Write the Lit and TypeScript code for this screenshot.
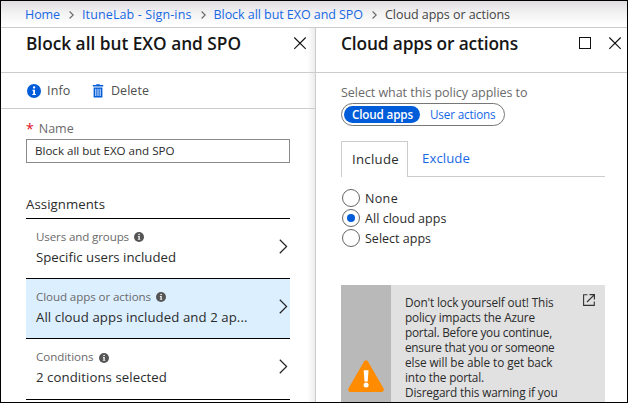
import { LitElement, html, css, svg } from "lit";
import { customElement, property, query, state } from "lit/decorators.js";
import { classMap } from "lit/directives/class-map.js";

/** A single line of text, tracked so that it fills a given measure. */
@customElement("fit-text")
class FitText extends LitElement {
  static styles = css`
    :host { display: block; flex: none; white-space: pre; }
    .run { display: inline-block; }
  `;
  @property() text = "";
  @property({ type: Number }) measure = 0;
  @query(".run") run!: HTMLElement;
  updated() {
    this.run.style.letterSpacing = "0px";
    const natural = this.run.getBoundingClientRect().width;
    if (this.measure) this.run.style.letterSpacing = `${(this.measure - natural) / this.text.length}px`;
  }
  render() {
    return html`<span class="run">${this.text}</span>`;
  }
}

const t = (text: string, measure: number, cls = "") =>
  html`<fit-text class=${cls} .text=${text} .measure=${measure}></fit-text>`;

const closeIcon = html`<svg class="icon" width="14" height="14" viewBox="0 0 14 14">
  <path d="M1.3.5 12.7 11.9M12.7.5 1.3 11.9" fill="none" stroke="#111" stroke-width="1.1"/></svg>`;
const squareIcon = html`<svg class="icon" width="12" height="12" viewBox="0 0 12 12">
  <rect x=".5" y=".5" width="11" height="11" fill="none" stroke="#111"/></svg>`;
const crumbIcon = html`<svg class="crumb-sep" width="5" height="8" viewBox="0 0 5 8">
  <path d="M.6.5 4.2 4 .6 7.5" fill="none" stroke="#666" stroke-width="1.1"/></svg>`;
const chevronIcon = html`<svg class="chevron" width="9" height="15" viewBox="0 0 9 15">
  <path d="M.8.8 7.6 7.5.8 14.2" fill="none" stroke="#222" stroke-width="1.2"/></svg>`;
const infoShape = (fill: string) => svg`<circle cx="7" cy="7" r="7" fill=${fill}/>
  <circle cx="7.1" cy="3.5" r="1.15" fill="#fff"/>
  <path d="M5.4 5.7H8V10H9V11H5.3V10H6.2V6.7H5.4Z" fill="#fff"/>`;
const infoIcon = html`<svg width="14" height="14" viewBox="0 0 14 14">${infoShape("#015cda")}</svg>`;
const hintIcon = html`<svg class="hint" width="10" height="10" viewBox="0 0 14 14">${infoShape("#555")}</svg>`;
const trashIcon = html`<svg class="trash" width="12" height="14" viewBox="0 0 12 14">
  <path d="M4.2 1V.2H7.8V1H11.2V2.5H.8V1Z" fill="#015cda"/>
  <path d="M1.6 3.5H10.4V13.5H1.6Z" fill="#015cda"/>
  <path d="M3.8 4.8V12M6 4.8V12M8.2 4.8V12" stroke="#fff" stroke-width=".9"/></svg>`;
const warningIcon = html`<svg class="warning" width="36" height="33" viewBox="0 0 36 33">
  <path d="M16 1.6Q18-.9 20 1.6L35.6 28.6Q36.8 32 33.2 32H2.8Q-.8 32 .4 28.6Z" fill="#ff8c00"/>
  <path d="M15.7 10.3H20.5L19.7 21.5H16.5Z" fill="#fff"/><circle cx="18.1" cy="24.9" r="2.5" fill="#fff"/></svg>`;
const openIcon = html`<svg class="open" width="12" height="12" viewBox="0 0 12 12">
  <path d="M4.5.7H.6V11.4H11.3V7.5" fill="none" stroke="#333" stroke-width="1.1"/>
  <path d="M6.5.6H11.4V5.5M11.2.8 4 8" fill="none" stroke="#333" stroke-width="1.2"/></svg>`;

const crumbs = [
  { text: "Home", measure: 35 },
  { text: "ItuneLab - Sign-ins", measure: 109.5 },
  { text: "Block all but EXO and SPO", measure: 149.5 },
];
const assignments = [
  { label: "Users and groups", labelW: 93, value: "Specific users included", valueW: 140 },
  { label: "Cloud apps or actions", labelW: 115, value: "All cloud apps included and 2 ap...", valueW: 211.5, selected: true },
  { label: "Conditions", labelW: 57.5, value: "2 conditions selected", valueW: 131 },
];
const scopes = [
  { text: "None", measure: 33 },
  { text: "All cloud apps", measure: 81.5 },
  { text: "Select apps", measure: 66 },
];
const warningLines: [string, number][] = [
  ["Don't lock yourself out! This", 148.5],
  ["policy impacts the Azure", 130],
  ["portal. Before you continue,", 147],
  ["ensure that you or someone", 149.5],
  ["else will be able to get back", 147.5],
  ["into the portal.", 79],
  ["Disregard this warning if you", 152.5],
];

@customElement("app-root")
class AppRoot extends LitElement {
  static styles = css`
    :host { display: block; font-family: "Open Sans", "Noto Sans", sans-serif; font-size: 12.5px; color: #2b2b2b; }
    * { box-sizing: border-box; }
    svg { display: block; flex: none; }
    .window { width: 628px; height: 403px; border: 1px solid #000; background: #fff; overflow: hidden; display: flex; flex-direction: column; }
    .crumbs { height: 27px; flex: none; display: flex; align-items: center; padding: 1px 0 0 24px; line-height: 24px; color: #444;
      border-bottom: 1px solid #ccc; background: linear-gradient(#dfdde0, #f3f2f3 45%, #fff 95%); }
    .crumb { color: #1768e4; }
    .crumb-sep { margin: 1px 8px 0 9px; }
    .blades { flex: 1; min-height: 0; display: flex; }
    .left { width: 315px; flex: none; border-right: 1px solid #ccc; background: linear-gradient(to right, #fff 306px, #ededed 314px); }
    .right { flex: 1; min-width: 0; }
    .head { height: 45px; display: flex; padding: 0 0 0 25px; border-bottom: 1px solid #ccc; }
    .title { font-size: 17.3px; font-weight: 540; line-height: 24px; margin-top: 4px; color: #161616; flex: 1; }
    .head .icon { margin-top: 9px; }
    .left .head .icon { margin-right: 8px; }
    .right .head .icon { margin-right: 5px; }
    .right .head .icon:nth-of-type(1) { margin: 9px 17px 0 0; }
    .tools { height: 36px; display: flex; align-items: center; padding-left: 26px; border-bottom: 1px solid #ccc; color: #505050; line-height: 24px; }
    .tool-label { margin-left: 6px; padding-top: 1px; }
    .trash { margin-left: 21.5px; margin-right: 1px; }
    .form { width: 264px; margin-left: 25px; }
    .field { display: flex; height: 30px; padding-top: 8px; line-height: 24px; color: #6a6a6a; }
    .star { color: #e00b1c; margin-right: 5px; font-size: 14px; }
    .input { height: 24px; border: 1px solid #8a8a8a; padding-left: 8px; line-height: 21px; font-size: 11.6px; }
    .section { height: 56px; padding-top: 29px; line-height: 24px; font-size: 13.2px; border-bottom: 1px solid #000; }
    .row { height: 60px; display: flex; justify-content: space-between; align-items: center; padding: 0 2px 0 10px; border-bottom: 1px solid #000; }
    .row.selected { background: #dcefff; }
    .row:last-child { height: 61px; }
    .text { display: flex; flex-direction: column; margin-top: -3px; }
    .label { display: flex; align-items: center; line-height: 20px; font-size: 11.6px; color: #6a6a6a; }
    .hint { margin: 1px 0 0 5px; }
    .value { line-height: 21px; font-size: 13.2px; }
    .chevron { margin-top: -5px; }
    .body { width: 264px; margin-left: 25px; }
    .caption { line-height: 24px; padding-top: 8px; color: #6a6a6a; height: 30px; }
    .pill { width: 164px; height: 23px; border: 1px solid #777; border-radius: 12px; padding: 2px; display: flex; align-items: center; font-size: 11.7px; line-height: 17px; }
    .on { width: 76px; height: 17px; border-radius: 9px; background: #015cda; color: #fff; font-weight: 600; padding-left: 8px; }
    .off { color: #1768e4; margin-left: 10px; }
    .tabs { height: 36px; margin-top: 15px; display: flex; font-size: 13.2px; line-height: 34px; }
    .tab { width: 67px; border: 1px solid #ccc; border-bottom: 0; padding-left: 10px; }
    .rest { flex: 1; border-bottom: 1px solid #ccc; padding-left: 14px; color: #1768e4; }
    .radios { padding-top: 11px; }
    .radio { height: 20px; display: flex; align-items: center; gap: 5px; padding-left: 1px; }
    .dot { width: 18px; height: 18px; border: 1px solid #666; border-radius: 50%; display: flex; align-items: center; justify-content: center; }
    .dot.checked::after { content: ""; width: 8px; height: 8px; border-radius: 50%; background: #015cda; }
    .notice { margin-top: 37px; height: 218px; display: flex; background: #e1e1e1; }
    .band { width: 50px; background: #b9b9b9; padding: 75px 0 0 7px; }
    .copy { flex: 1; padding: 10px 0 0 14px; font-size: 11.8px; line-height: 15px; }
    .open { margin: 9px 10.5px 0 0; }
  `;
  @state() scope = 1;

  render() {
    return html`<div class="window">
      <nav class="crumbs">
        ${crumbs.map((c) => html`${t(c.text, c.measure, "crumb")}${crumbIcon}`)}
        ${t("Cloud apps or actions", 125)}
      </nav>
      <div class="blades">
        <section class="left">
          <div class="head">${t("Block all but EXO and SPO", 215, "title")}${closeIcon}</div>
          <div class="tools">${infoIcon}${t("Info", 23.5, "tool-label")}${trashIcon}${t("Delete", 38, "tool-label")}</div>
          <div class="form">
            <div class="field"><span class="star">*</span>${t("Name", 35)}</div>
            <div class="input">${t("Block all but EXO and SPO", 139.5)}</div>
            <div class="section">${t("Assignments", 79)}</div>
            ${assignments.map((a) => html`<div class=${classMap({ row: true, selected: !!a.selected })}>
              <div class="text">
                <div class="label">${t(a.label, a.labelW)}${hintIcon}</div>
                ${t(a.value, a.valueW, "value")}
              </div>${chevronIcon}
            </div>`)}
          </div>
        </section>
        <section class="right">
          <div class="head">${t("Cloud apps or actions", 177, "title")}${squareIcon}${closeIcon}</div>
          <div class="body">
            <div class="caption">${t("Select what this policy applies to", 186.5)}</div>
            <div class="pill"><div class="on">${t("Cloud apps", 61)}</div>${t("User actions", 65.5, "off")}</div>
            <div class="tabs"><div class="tab">${t("Include", 47)}</div><div class="rest">${t("Exclude", 48)}</div></div>
            <div class="radios">
              ${scopes.map((s, i) => html`<div class="radio" @click=${() => (this.scope = i)}>
                <span class=${classMap({ dot: true, checked: i === this.scope })}></span>${t(s.text, s.measure)}
              </div>`)}
            </div>
            <div class="notice">
              <div class="band">${warningIcon}</div>
              <div class="copy">${warningLines.map(([line, w]) => t(line, w))}</div>
              ${openIcon}
            </div>
          </div>
        </section>
      </div>
    </div>`;
  }
}
